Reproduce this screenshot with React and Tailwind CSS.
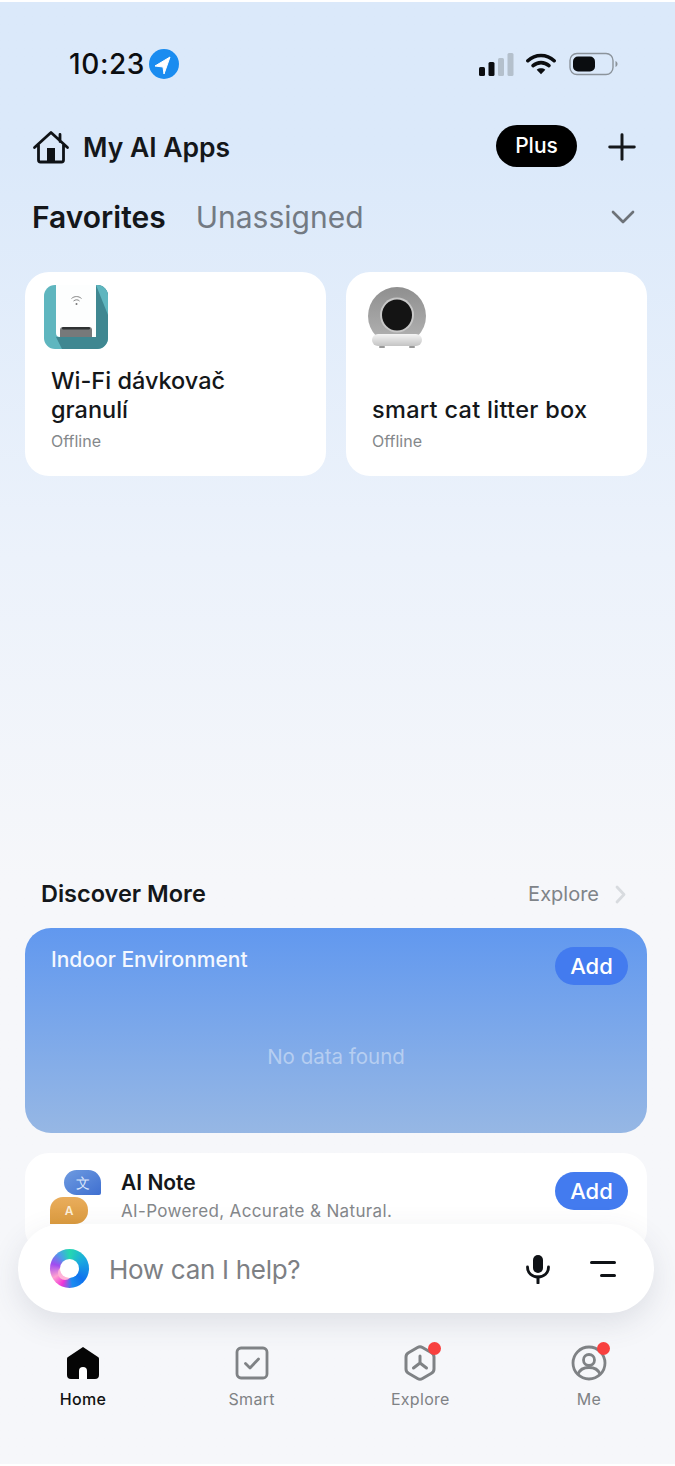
import { Plus, ChevronDown } from "lucide-react";

const font = { fontFamily: "Inter, 'Noto Sans', sans-serif" };

function HomeOutline() {
  return (
    <svg width="38" height="34" viewBox="0 0 38 34" fill="none">
      <path
        d="M2.500 17.500 19 2.500l16.500 15M6.500 15v15a2 2 0 0 0 2 2h21a2 2 0 0 0 2-2V15M28 4.500v7"
        stroke="#0f1216"
        strokeWidth="2.800"
        strokeLinecap="round"
        strokeLinejoin="round"
      />
      <rect x="15" y="18" width="8" height="14" fill="#0f1216" />
    </svg>
  );
}

function StatusIcons() {
  return (
    <div className="flex items-center gap-[12px]">
      <svg width="35" height="23" viewBox="0 0 35 23">
        <rect x="0" y="14" width="6" height="9" rx="1.500" fill="#0b0d10" />
        <rect x="9.500" y="9" width="6" height="14" rx="1.500" fill="#0b0d10" />
        <rect x="19" y="5" width="6" height="18" rx="1.500" fill="#b4c0cc" />
        <rect x="28.500" y="0" width="6" height="23" rx="1.500" fill="#b4c0cc" />
      </svg>
      <svg width="30" height="24" viewBox="0 0 32 24" fill="none">
        <path d="M2 8.500c8-7.500 20-7.500 28 0" stroke="#0b0d10" strokeWidth="3.800" strokeLinecap="round" />
        <path d="M7.500 13.800c5-4.400 12-4.400 17 0" stroke="#0b0d10" strokeWidth="3.800" strokeLinecap="round" />
        <path d="M16 23l-4.600-5c2.700-2 6.500-2 9.200 0z" fill="#0b0d10" />
      </svg>
      <svg width="50" height="24" viewBox="0 0 50 24" fill="none">
        <rect x="2" y="1.500" width="43" height="21" rx="7" stroke="#8b939b" strokeWidth="1.400" />
        <rect x="5" y="4.500" width="22" height="15" rx="5" fill="#0b0d10" />
        <path d="M47.500 9v6c1.200-.5 2-1.700 2-3s-.8-2.500-2-3z" fill="#8b939b" />
      </svg>
    </div>
  );
}

function FeederIcon() {
  return (
    <svg width="64" height="64" viewBox="0 0 64 64">
      <rect width="64" height="64" rx="11" fill="#5fb6bf" />
      <path d="M52 0h1a11 11 0 0 1 11 11v42a11 11 0 0 1-11 11H18l-6-12h40z" fill="#3f8791" />
      <path d="M52 0l12 30V11A11 11 0 0 0 53 0z" fill="#5fb6bf" />
      <path d="M12 0h40v52H16a4 4 0 0 1-4-4z" fill="#fdfefe" />
      <path d="M16 52v-7a3 3 0 0 1 3-3h26a3 3 0 0 1 3 3v7z" fill="#77797a" />
      <rect x="18" y="42" width="28" height="2.500" rx="1.200" fill="#2f3233" />
      <path d="M27.500 13.500c3-2.600 7-2.600 10 0M29.500 16c2-1.600 4.500-1.600 6 0" stroke="#777" strokeWidth="0.900" fill="none" />
      <circle cx="32.500" cy="19" r="1" fill="#777" />
    </svg>
  );
}

function LitterIcon() {
  return (
    <svg width="58" height="62" viewBox="0 0 58 62">
      <defs>
        <linearGradient id="litterBase" x1="0" y1="0" x2="0" y2="1">
          <stop offset="0" stopColor="#f4f4f4" />
          <stop offset="1" stopColor="#c4c4c4" />
        </linearGradient>
        <linearGradient id="litterBody" x1="0" y1="0" x2="0" y2="1">
          <stop offset="0" stopColor="#8f8f8f" />
          <stop offset="1" stopColor="#b4b4b4" />
        </linearGradient>
      </defs>
      <circle cx="29" cy="29" r="29" fill="url(#litterBody)" />
      <ellipse cx="29" cy="28" rx="17" ry="17.500" fill="#c8c8c8" />
      <ellipse cx="29" cy="28" rx="15" ry="15.500" fill="#141414" />
      <rect x="4" y="47" width="50" height="12" rx="6" fill="url(#litterBase)" />
      <rect x="11" y="59" width="6" height="2" rx="1" fill="#999" />
      <rect x="41" y="59" width="6" height="2" rx="1" fill="#999" />
    </svg>
  );
}

function TranslateIcon() {
  return (
    <div className="relative h-[58px] w-[52px] shrink-0">
      <div className="absolute left-[13px] top-0 flex h-[25px] w-[37px] items-center justify-center rounded-t-[13px] rounded-bl-[13px] rounded-br-[2px] bg-gradient-to-br from-[#6f9be0] to-[#3f6fd0] text-[14px] font-medium text-[#dbe6fa]">
        文
      </div>
      <div className="absolute left-[-1px] top-[27px] flex h-[27px] w-[38px] items-center justify-center rounded-t-[13px] rounded-br-[13px] bg-gradient-to-b from-[#e9ad5c] to-[#dc9b3e] text-[12px] font-semibold text-[#fbeed8]">
        A
      </div>
    </div>
  );
}

function AssistantLogo() {
  return (
    <div className="relative flex h-[39px] w-[39px] shrink-0 items-center justify-center rounded-full bg-[conic-gradient(#24d8b0_0deg,#1aa8e0_60deg,#0f72ee_130deg,#1a8cf0_170deg,#f034d8_205deg,#ffa0d0_240deg,#a04cf0_285deg,#4aa0e8_325deg,#24d8b0_360deg)]">
      <div className="absolute left-[8px] top-[17px] h-[14px] w-[14px] rounded-full bg-[#ffb4d8]" />
      <div className="relative h-[19px] w-[19px] rounded-full bg-white" />
    </div>
  );
}

function MicIcon() {
  return (
    <svg width="26" height="30" viewBox="0 0 26 30" fill="none">
      <rect x="8" y="1" width="10" height="18" rx="5" fill="#0f1216" />
      <path d="M2.500 13c0 6 4.500 10 10.500 10s10.500-4 10.500-10" stroke="#0f1216" strokeWidth="2.800" strokeLinecap="round" />
      <path d="M13 23v6" stroke="#0f1216" strokeWidth="3" strokeLinecap="round" />
    </svg>
  );
}

function NavItem({ label, active, dot, children }) {
  return (
    <div className="flex w-[100px] flex-col items-center">
      <div className="relative flex h-[38px] w-[40px] items-center justify-center">
        {children}
        {dot && <span className="absolute right-[-1px] top-[-2px] h-[13px] w-[13px] rounded-full bg-[#f8403f]" />}
      </div>
      <span className={`mt-[7px] text-[16px] leading-[20px] tracking-[0.3px] ${active ? "font-medium text-[#111]" : "text-[#7f8285]"}`}>
        {label}
      </span>
    </div>
  );
}

function DeviceCard({ icon, iconClass, name }) {
  return (
    <div className="flex h-[204px] flex-1 flex-col rounded-[24px] bg-white pb-[24px]">
      <div className={iconClass}>{icon}</div>
      <div className="mt-auto pl-[26px] text-[23.500px] font-medium leading-[29px] text-[#14171a]">{name}</div>
      <div className="mt-[6px] pl-[26px] text-[16px] leading-[22px] text-[#85888b]">Offline</div>
    </div>
  );
}

export default function App() {
  return (
    <div
      style={font}
      className="relative h-[1466px] w-[675px] overflow-hidden border-y-2 border-white bg-gradient-to-b from-[#dbe9fa] from-[10%] via-[#ecf2fb] via-[38%] to-[#f6f7fa] to-[60%]"
    >
      {/* status bar */}
      <div className="mt-[42px] flex h-[40px] items-center justify-between pl-[69px] pr-[57px]">
        <div className="flex items-center gap-[4px]">
          <span className="text-[28px] font-medium leading-[40px] tracking-[0.6px] text-[#0b0d10]">10:23</span>
          <svg width="30" height="30" viewBox="0 0 30 30">
            <circle cx="15" cy="15" r="15" fill="#1a8cf0" />
            <path d="M21 8 6 17l8 1 1 7z" fill="#fff" stroke="#fff" strokeWidth="1" strokeLinejoin="round" />
          </svg>
        </div>
        <StatusIcons />
      </div>

      {/* header */}
      <div className="mt-[41px] flex h-[44px] items-center justify-between pl-[32px] pr-[32px]">
        <div className="flex items-center gap-[13px]">
          <HomeOutline />
          <span className="mt-[2px] text-[26.500px] font-semibold text-[#14171a]">My AI Apps</span>
        </div>
        <div className="flex items-center gap-[24px]">
          <div className="-mt-[2px] flex h-[42px] w-[81px] items-center justify-center rounded-full bg-black text-[21px] font-medium text-white">
            Plus
          </div>
          <Plus size={42} strokeWidth={1.700} className="text-[#14171a]" />
        </div>
      </div>

      {/* tabs */}
      <div className="mt-[26px] flex h-[44px] items-center pl-[32px] pr-[32px]">
        <span className="text-[30px] font-semibold text-[#14171a]">Favorites</span>
        <span className="ml-[30px] text-[30px] text-[#737a83]">Unassigned</span>
        <ChevronDown size={40} strokeWidth={1.600} className="ml-auto text-[#6d7278]" />
      </div>

      {/* device cards */}
      <div className="mt-[33px] flex gap-[20px] pl-[25px] pr-[28px]">
        <DeviceCard icon={<FeederIcon />} iconClass="ml-[19px] mt-[13px]" name={<>Wi-Fi dávkovač<br />granulí</>} />
        <DeviceCard icon={<LitterIcon />} iconClass="ml-[22px] mt-[15px]" name={<span className="tracking-[0.3px]">smart cat litter box</span>} />
      </div>

      {/* discover */}
      <div className="mt-[400px] flex h-[36px] items-center justify-between pl-[41px] pr-[49px]">
        <span className="text-[23.500px] font-semibold text-[#14171a]">Discover More</span>
        <div className="flex items-center gap-[16px]">
          <span className="text-[20px] text-[#7f8489]">Explore</span>
          <svg width="11" height="19" viewBox="0 0 11 19" fill="none">
            <path d="M2 2l7 7.500-7 7.500" stroke="#d8dbdf" strokeWidth="2.800" strokeLinecap="round" strokeLinejoin="round" />
          </svg>
        </div>
      </div>

      <div className="ml-[25px] mr-[28px] mt-[16px] flex h-[205px] flex-col rounded-[26px] bg-gradient-to-b from-[#6198ef] to-[#96b7e4] pl-[26px] pr-[19px]">
        <div className="flex items-start justify-between pt-[19px]">
          <span className="text-[21px] font-medium leading-[26px] text-[#f4f8ff]">Indoor Environment</span>
          <div className="flex h-[38px] w-[73px] items-center justify-center rounded-full bg-[#437bef] text-[22px] font-medium text-white">
            Add
          </div>
        </div>
        <div className="mt-[59px] pr-[7px] text-center text-[20.500px] leading-[26px] text-[#b6cef1]">No data found</div>
      </div>

      <div className="ml-[25px] mr-[28px] mt-[20px] flex h-[100px] rounded-[24px] bg-white pl-[26px] pr-[19px] pt-[17px]">
        <TranslateIcon />
        <div className="ml-[18px] flex-1">
          <div className="text-[21px] font-semibold leading-[26px] text-[#14171a]">AI Note</div>
          <div className="mt-[4px] text-[17px] leading-[22px] tracking-[0.35px] text-[#85888b]">AI-Powered, Accurate &amp; Natural.</div>
        </div>
        <div className="mt-[2px] flex h-[38px] w-[73px] items-center justify-center rounded-full bg-[#437bef] text-[22px] font-medium text-white">
          Add
        </div>
      </div>

      {/* floating assistant bar */}
      <div className="absolute left-[18px] top-[1222px] flex h-[89px] w-[636px] items-center rounded-[44px] bg-white pl-[32px] pr-[38px] shadow-[0_10px_30px_rgba(60,70,90,0.13)]">
        <AssistantLogo />
        <span className="ml-[20px] mt-[1px] text-[26px] tracking-[-0.3px] text-[#7d8084]">How can I help?</span>
        <div className="ml-auto flex items-center gap-[39px]">
          <MicIcon />
          <svg width="26" height="18" viewBox="0 0 26 18" fill="none">
            <path d="M1.500 2.500h23M11.500 15.500h13" stroke="#0f1216" strokeWidth="3" strokeLinecap="round" />
          </svg>
        </div>
      </div>

      {/* bottom nav */}
      <div className="absolute left-0 top-[1342px] flex w-full justify-between pl-[33px] pr-[36px]">
        <NavItem label="Home" active>
          <svg width="34" height="34" viewBox="0 0 34 34">
            <path d="M17 1 32 11a2 2 0 0 1 1 2v16a4 4 0 0 1-4 4H5a4 4 0 0 1-4-4V13a2 2 0 0 1 1-2z" fill="#050505" />
            <path d="M13 33v-8a4 4 0 0 1 8 0v8z" fill="#fff" />
          </svg>
        </NavItem>
        <NavItem label="Smart">
          <svg width="34" height="34" viewBox="0 0 34 34" fill="none">
            <rect x="2" y="2" width="30" height="30" rx="4" stroke="#7f8285" strokeWidth="2.800" />
            <path d="M10.500 17.500 15 22l8.500-9" stroke="#7f8285" strokeWidth="2.800" strokeLinecap="round" strokeLinejoin="round" />
          </svg>
        </NavItem>
        <NavItem label="Explore" dot>
          <svg width="32" height="36" viewBox="0 0 32 36" fill="none">
            <path
              d="M13.500 2.500a5 5 0 0 1 5 0l9 5.200a5 5 0 0 1 2.500 4.300v12a5 5 0 0 1-2.500 4.300l-9 5.200a5 5 0 0 1-5 0l-9-5.200A5 5 0 0 1 2 24V12a5 5 0 0 1 2.500-4.300z"
              stroke="#7f8285"
              strokeWidth="3"
            />
            <path d="M16 11v7M16 18l-6.500 5M16 18l6.500 5" stroke="#7f8285" strokeWidth="3" strokeLinecap="round" />
          </svg>
        </NavItem>
        <NavItem label="Me" dot>
          <svg width="36" height="36" viewBox="0 0 36 36" fill="none">
            <circle cx="18" cy="18" r="16" stroke="#7f8285" strokeWidth="2.800" />
            <circle cx="18" cy="15" r="5.500" stroke="#7f8285" strokeWidth="2.800" />
            <path d="M7 29c2-5 6-6.500 11-6.500S27 24 29 29" stroke="#7f8285" strokeWidth="2.800" />
          </svg>
        </NavItem>
      </div>
    </div>
  );
}
